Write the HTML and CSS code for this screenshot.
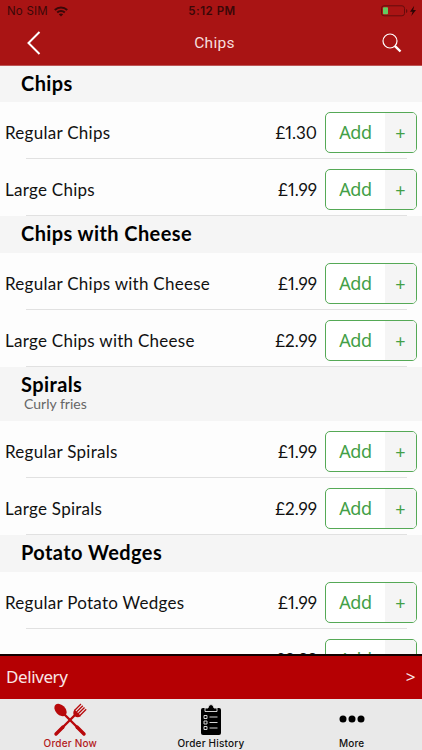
FILE: index.html
```html
<!DOCTYPE html>
<html lang="en">
<head>
  <meta charset="UTF-8" />
  <meta name="viewport" content="width=device-width, initial-scale=1" />
  <title>Chips</title>
  <link rel="stylesheet" href="styles.css">
</head>
<body>
  <div class="app">
    <header class="header">
      <div class="status-bar">
        <div class="carrier">
          <span>No SIM</span>
          <svg class="wifi" width="14" height="11" viewBox="0 0 14 11" fill="none" stroke="#3a0808" stroke-width="2">
            <path d="M0.8 4C4.3 0.6 9.7 0.6 13.2 4" />
            <path d="M3.2 6.5C5.3 4.5 8.7 4.5 10.8 6.5" />
            <path d="M7 10.5L4.8 8.3C6 7.2 8 7.2 9.2 8.3Z" fill="#3a0808" stroke="none" />
          </svg>
        </div>
        <div class="time">5:12 PM</div>
        <div class="power">
          <svg width="36" height="12" viewBox="0 0 36 12">
            <rect x="0.5" y="0.8" width="23" height="10" rx="2.5" fill="none" stroke="#650c0c" />
            <rect x="2" y="2.3" width="5" height="7" rx="0.8" fill="#63ca60" />
            <path d="M25 4v4q1.4-.6 1.4-2T25 4z" fill="#650c0c" />
            <path d="M33.2 0.8L29 6.7h2.6L30.3 11l4.7-6h-2.8z" fill="#2a0505" />
          </svg>
        </div>
      </div>
      <div class="nav-bar">
        <svg class="back" width="14" height="24" viewBox="0 0 14 24" fill="none" stroke="#fff" stroke-width="2">
          <path d="M12.5 1L1.5 12L12.5 23" />
        </svg>
        <h1 class="title">Chips</h1>
        <svg class="search" width="20" height="20" viewBox="0 0 20 20" fill="none" stroke="#fff">
          <circle cx="8" cy="8" r="7" stroke-width="1.2" />
          <path d="M12.8 12.8L18.5 18.5" stroke-width="2.4" />
        </svg>
      </div>
    </header>

    <main class="menu">
      <section>
        <div class="section-head"><h2>Chips</h2></div>
        <div class="item">
          <span class="name">Regular Chips</span>
          <span class="price">£1.30</span>
          <button class="add-btn"><span class="add">Add</span><span class="plus">+</span></button>
        </div>
        <div class="item">
          <span class="name">Large Chips</span>
          <span class="price">£1.99</span>
          <button class="add-btn"><span class="add">Add</span><span class="plus">+</span></button>
        </div>
      </section>

      <section>
        <div class="section-head"><h2>Chips with Cheese</h2></div>
        <div class="item">
          <span class="name">Regular Chips with Cheese</span>
          <span class="price">£1.99</span>
          <button class="add-btn"><span class="add">Add</span><span class="plus">+</span></button>
        </div>
        <div class="item">
          <span class="name">Large Chips with Cheese</span>
          <span class="price">£2.99</span>
          <button class="add-btn"><span class="add">Add</span><span class="plus">+</span></button>
        </div>
      </section>

      <section>
        <div class="section-head with-note">
          <h2>Spirals</h2>
          <p>Curly fries</p>
        </div>
        <div class="item">
          <span class="name">Regular Spirals</span>
          <span class="price">£1.99</span>
          <button class="add-btn"><span class="add">Add</span><span class="plus">+</span></button>
        </div>
        <div class="item">
          <span class="name">Large Spirals</span>
          <span class="price">£2.99</span>
          <button class="add-btn"><span class="add">Add</span><span class="plus">+</span></button>
        </div>
      </section>

      <section>
        <div class="section-head"><h2>Potato Wedges</h2></div>
        <div class="item">
          <span class="name">Regular Potato Wedges</span>
          <span class="price">£1.99</span>
          <button class="add-btn"><span class="add">Add</span><span class="plus">+</span></button>
        </div>
        <div class="item">
          <span class="name"></span>
          <span class="price">£2.99</span>
          <button class="add-btn"><span class="add">Add</span><span class="plus">+</span></button>
        </div>
      </section>
    </main>

    <div class="delivery">
      <span>Delivery</span>
      <span class="arrow">&gt;</span>
    </div>

    <nav class="tabs">
      <a class="tab active">
        <svg width="34" height="34" viewBox="0 0 34 34">
          <!-- spoon -->
          <ellipse cx="7.5" cy="7" rx="4.9" ry="7.2" transform="rotate(-44 7.5 7)" fill="#b8090b" />
          <path d="M11 11L31 31" stroke="#b8090b" stroke-width="2.4" stroke-linecap="round" />
          <path d="M24 24L31 31" stroke="#b8090b" stroke-width="3.4" stroke-linecap="round" />
          <!-- fork -->
          <path d="M3 31L23 11" stroke="#b8090b" stroke-width="2.4" stroke-linecap="round" />
          <path d="M3 31L10 24" stroke="#b8090b" stroke-width="3.4" stroke-linecap="round" />
          <path d="M21.5 6.5L28 13Q24.5 15.5 21.5 13Q19 10 21.5 6.5z" fill="#b8090b" />
          <path d="M21.5 7.5L28 1M23.5 9L29.8 2.7M25.2 10.8L31.5 4.5M27 12.5L33.2 6.3" stroke="#b8090b" stroke-width="1.3" />
        </svg>
        <span>Order Now</span>
      </a>
      <a class="tab">
        <svg width="22" height="34" viewBox="0 0 22 34">
          <rect x="1" y="5" width="20" height="27" rx="2" fill="#000" />
          <path d="M5 8.5V5h3Q8.5 1.5 11 1.5T14 5h3v3.5z" fill="#000" stroke="#e9e9e9" stroke-width="0.9" />
          <g fill="none" stroke="#d5d5d5" stroke-width="1">
            <path d="M4 12.5h3v3h-3zM4 18h3v3h-3zM4 23.5h3v3h-3z" />
            <path d="M9.5 14h8M9.5 19.5h8M9.5 25h8" />
          </g>
        </svg>
        <span>Order History</span>
      </a>
      <a class="tab">
        <svg width="26" height="34" viewBox="0 0 26 34">
          <circle cx="4" cy="16" r="3.5" />
          <circle cx="13" cy="16" r="3.5" />
          <circle cx="22" cy="16" r="3.5" />
        </svg>
        <span>More</span>
      </a>
    </nav>
  </div>
</body>
</html>
```
FILE: styles.css
```css
* {
  box-sizing: border-box;
}
body {
  margin: 0;
  font-family: Lato, "Open Sans", sans-serif;
  color: #111;
  background-color: #fdfdfd;
}
h1, h2, p {
  margin: 0;
}
.app {
  display: flex;
  flex-direction: column;
  height: 750px;
  overflow: hidden;
}

/* header */
.header {
  flex: none;
  height: 66px;
  background-color: #a91414;
  border-bottom: 1px solid #bd5555;
}
.status-bar {
  display: grid;
  grid-template-columns: 1fr auto 1fr;
  align-items: center;
  height: 22px;
  padding: 0 5px 0 7px;
  font-family: Inter, sans-serif;
  font-size: 11.5px;
  color: #3a0808;
}
.carrier {
  display: flex;
  align-items: center;
  gap: 6px;
  letter-spacing: 0.2px;
}
.time {
  font-weight: 600;
  letter-spacing: 0.5px;
}
.power {
  display: flex;
  justify-content: flex-end;
}
.nav-bar {
  display: grid;
  grid-template-columns: 1fr auto 1fr;
  align-items: center;
  height: 42px;
  padding: 0 20px 0 27px;
}
.search {
  justify-self: end;
}
.title {
  font-family: Roboto, sans-serif;
  font-size: 15.5px;
  font-weight: 400;
  color: #f6dede;
  letter-spacing: 0.3px;
}

/* menu list */
.menu {
  flex: 1;
  min-height: 0;
  overflow: hidden;
}
.section-head {
  height: 37px;
  padding: 5px 21px 0;
  background-color: #f5f5f5;
}
.section-head h2 {
  font-size: 20px;
  line-height: 24px;
  font-weight: 700;
  letter-spacing: 0.4px;
  color: #000;
}
.menu section:first-child .section-head {
  height: 36px;
}
.section-head.with-note {
  height: 54px;
}
.section-head.with-note h2 {
  line-height: 25px;
}
.section-head p {
  padding-left: 3px;
  font-size: 14px;
  line-height: 14px;
  color: #666;
}
.item {
  display: flex;
  align-items: center;
  height: 57px;
  padding: 3px 5px 0;
  background: linear-gradient(#e1e1e1, #e1e1e1) 26px 100% / 381px 1px no-repeat;
}
.name {
  flex: 1;
  font-size: 17px;
  letter-spacing: 0.27px;
}
.price {
  margin-right: 8px;
  font-size: 17px;
  font-feature-settings: "pnum";
}
.add-btn {
  display: flex;
  width: 92px;
  height: 41px;
  padding: 0;
  border: 1px solid #55a956;
  border-radius: 5px;
  background-color: #fff;
  color: #43a047;
  font-family: "Noto Sans", sans-serif;
  overflow: hidden;
}
.add {
  width: 59px;
  font-size: 18px;
  line-height: 39px;
  letter-spacing: -0.4px;
}
.plus {
  flex: 1;
  font-size: 18px;
  line-height: 41px;
  background-color: #f5f5f5;
}

/* delivery bar */
.delivery {
  flex: none;
  display: flex;
  align-items: center;
  justify-content: space-between;
  height: 45px;
  padding: 0 7px 2px 6px;
  border-top: 2px solid #100;
  background-color: #b50003;
  color: #f9e6e6;
  font-family: "Noto Sans", sans-serif;
  font-size: 17px;
  letter-spacing: -0.4px;
}

/* bottom tabs */
.tabs {
  flex: none;
  display: grid;
  grid-template-columns: repeat(3, 1fr);
  height: 51px;
  background-color: #e9e9e9;
}
.tab {
  display: flex;
  flex-direction: column;
  align-items: center;
  justify-content: space-between;
  padding: 4px 0 1px;
  font-family: Inter, sans-serif;
  font-size: 10px;
  font-weight: 500;
  line-height: 13px;
  letter-spacing: 0.2px;
  color: #111;
}
.tab.active {
  color: #b3191b;
}
```
